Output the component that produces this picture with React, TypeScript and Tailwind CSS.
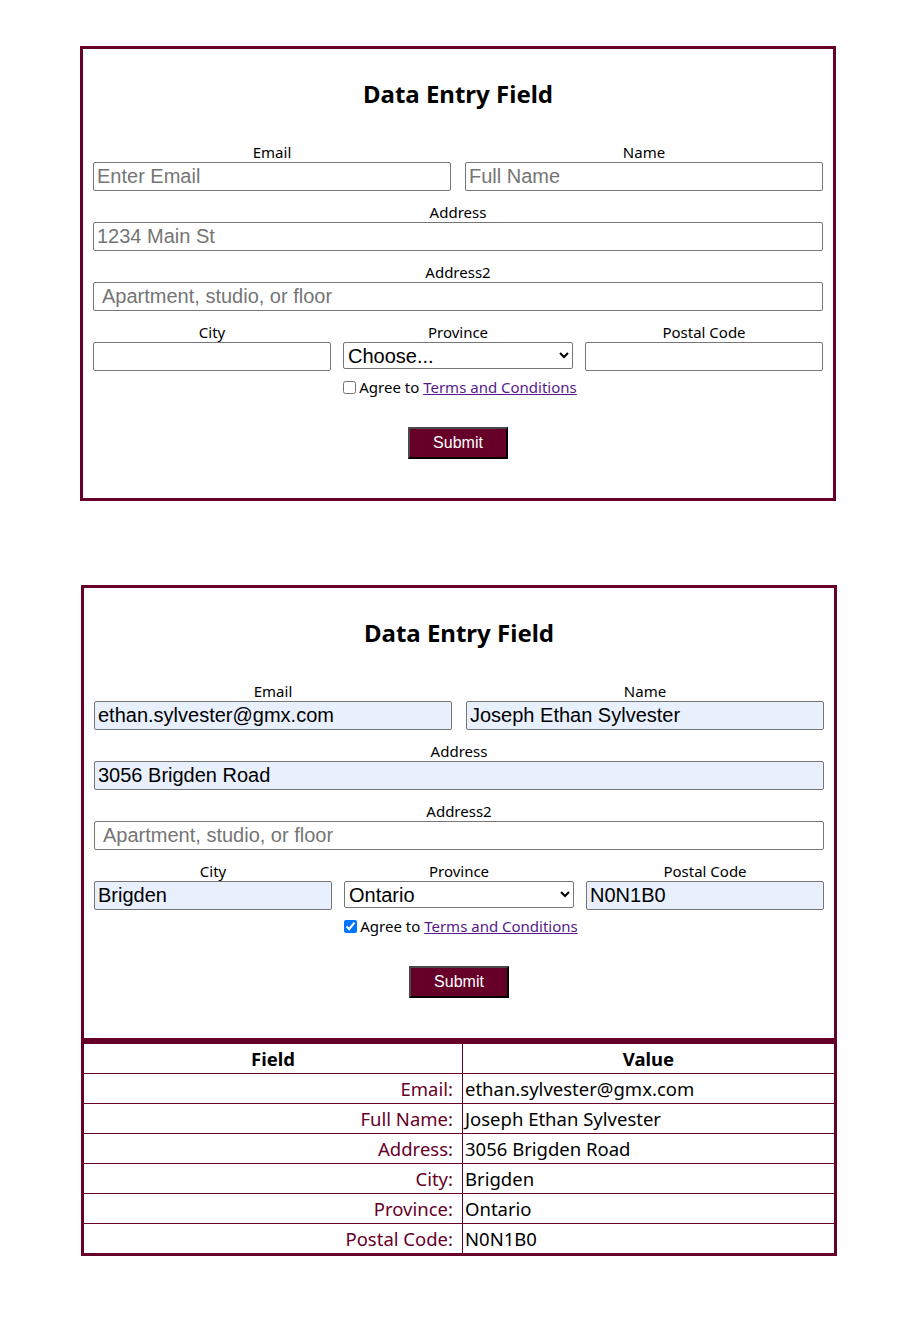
import React from "react";

const MAROON = "#660029";

type Props = { filled?: boolean };

function Field({ label, children }: { label: string; children: React.ReactNode }) {
  return (
    <div className="flex flex-col">
      <label className="h-[20px] text-center text-[15px] leading-[20px] text-black">{label}</label>
      {children}
    </div>
  );
}

const inputBase =
  "w-full h-[29px] border border-[#767676] rounded-[2px] px-[3px] text-[20px] leading-[23px] font-['Liberation_Sans',Arial,sans-serif] text-black placeholder:text-[#757575] outline-none";

function DataForm({ filled }: Props) {
  const bg = filled ? "bg-[#e8f0fe]" : "bg-white";
  return (
    <div className={`px-[10px] pt-[29px] ${filled ? "pb-[40px]" : "pb-[39px]"}`}>
      <h1 className="text-center text-[24px] font-bold leading-[31px] text-black">Data Entry Field</h1>

      <div className="mt-[33px] flex flex-col gap-[11px]">
        <div className="grid grid-cols-2 gap-[14px]">
          <Field label="Email">
            <input className={`${inputBase} ${bg}`} placeholder="Enter Email" defaultValue={filled ? "ethan.sylvester@gmx.com" : ""} />
          </Field>
          <Field label="Name">
            <input className={`${inputBase} ${bg}`} placeholder="Full Name" defaultValue={filled ? "Joseph Ethan Sylvester" : ""} />
          </Field>
        </div>

        <Field label="Address">
          <input className={`${inputBase} ${bg}`} placeholder="1234 Main St" defaultValue={filled ? "3056 Brigden Road" : ""} />
        </Field>

        <Field label="Address2">
          <input className={`${inputBase} bg-white pl-[8px]`} placeholder="Apartment, studio, or floor" />
        </Field>

        <div className="grid grid-cols-3 gap-[8px]">
          <Field label="City">
            <input className={`${inputBase} ${bg}`} defaultValue={filled ? "Brigden" : ""} />
          </Field>
          <Field label="Province">
            <div className="px-[4px]">
              <select
                className="w-full h-[27px] border border-[#767676] rounded-[2px] bg-white text-[20px] leading-[23px] font-['Liberation_Sans',Arial,sans-serif] text-black"
                defaultValue={filled ? "ON" : ""}
              >
                <option value="">Choose...</option>
                <option value="ON">Ontario</option>
                <option value="QC">Quebec</option>
              </select>
            </div>
          </Field>
          <Field label="Postal Code">
            <input className={`${inputBase} ${bg}`} defaultValue={filled ? "N0N1B0" : ""} />
          </Field>
        </div>
      </div>

      <div className="mt-[6px] flex h-[20px] items-center justify-center gap-[3px] pl-[4px] text-[15px] leading-[20px]">
        <input type="checkbox" defaultChecked={filled} className="h-[13px] w-[13px]" />
        <span>
          Agree to{" "}
          <a href="#" className="text-[#551a8b] underline">
            Terms and Conditions
          </a>
        </span>
      </div>

      <div className="mt-[30px] flex justify-center">
        <button
          className="h-[32px] w-[100px] border-2 border-t-[#4a4a4a] border-l-[#4a4a4a] border-r-black border-b-black text-[16px] font-['Liberation_Sans',Arial,sans-serif] text-white"
          style={{ backgroundColor: MAROON }}
        >
          Submit
        </button>
      </div>
    </div>
  );
}

const rows: [string, string][] = [
  ["Email:", "ethan.sylvester@gmx.com"],
  ["Full Name:", "Joseph Ethan Sylvester"],
  ["Address:", "3056 Brigden Road"],
  ["City:", "Brigden"],
  ["Province:", "Ontario"],
  ["Postal Code:", "N0N1B0"],
];

function ResultTable() {
  return (
    <div className="border-t-[6px] border-[#660029] text-[18.5px]">
      <div className="grid h-[30px] grid-cols-[379px_1fr] border-b border-[#660029] font-bold leading-[29px] text-black">
        <div className="border-r border-[#660029] text-center">Field</div>
        <div className="text-center">Value</div>
      </div>
      {rows.map(([k, v], i) => (
        <div
          key={k}
          className={`grid grid-cols-[379px_1fr] leading-[29px] ${i < rows.length - 1 ? "h-[30px] border-b border-[#660029]" : "h-[29px]"}`}
        >
          <div className="border-r border-[#660029] pr-[9px] text-right text-[#660029]">{k}</div>
          <div className="pl-[2px] text-black">{v}</div>
        </div>
      ))}
    </div>
  );
}

export default function App() {
  return (
    <div className="min-h-[1328px] bg-white pt-[46px] font-['Noto_Sans',sans-serif] text-black">
      <div className="ml-[80px] w-[756px] border-[3px] border-[#660029]">
        <DataForm />
      </div>
      <div className="ml-[81px] mt-[84px] w-[756px] border-[3px] border-[#660029]">
        <DataForm filled />
        <ResultTable />
      </div>
    </div>
  );
}
